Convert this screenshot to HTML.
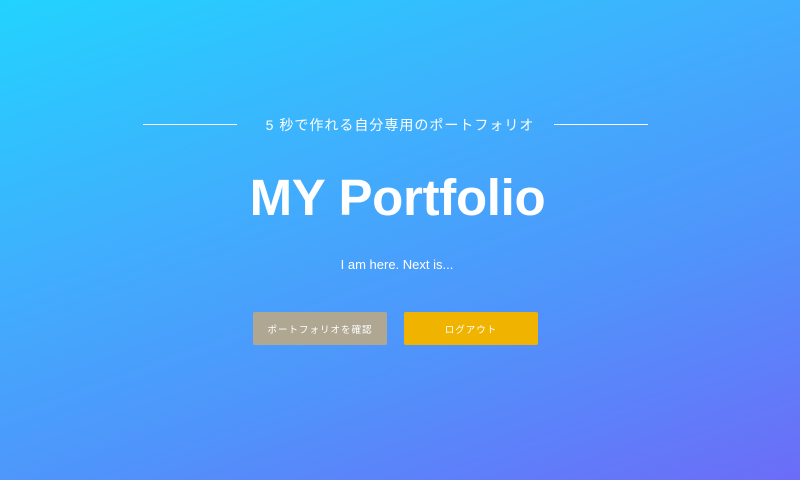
<!DOCTYPE html>
<html><head><meta charset="utf-8"><style>
html,body{margin:0;width:800px;height:480px;overflow:hidden}
body{background:linear-gradient(160deg,#22d3fe 0%,#3fb0fd 35%,#4f94fb 65%,#6c6cf8 100%);font-family:"Liberation Sans","Noto Sans CJK JP",sans-serif;color:#fff;position:relative}
.line{position:absolute;top:124px;height:1px;background:#fff;width:94px}
.sub{position:absolute;top:115px;left:0;width:800px;text-align:center;font-size:14px;letter-spacing:1px}
h1{position:absolute;top:168px;left:0;width:795px;margin:0;text-align:center;font-size:51px;font-weight:bold;letter-spacing:-0.3px}
.next{position:absolute;top:257px;left:0;width:794px;text-align:center;font-size:13px}
.btn{position:absolute;top:312px;width:134px;height:33px;border-radius:2px;font-size:9.5px;letter-spacing:1px;display:flex;align-items:center;justify-content:center}
</style></head><body>
<div class="line" style="left:143px"></div>
<div class="line" style="left:554px"></div>
<div class="sub">5 秒で作れる自分専用のポートフォリオ</div>
<h1>MY Portfolio</h1>
<div class="next">I am here. Next is...</div>
<div class="btn" style="left:253px;background:#b0a792">ポートフォリオを確認</div>
<div class="btn" style="left:404px;background:#f0b400">ログアウト</div>
</body></html>
